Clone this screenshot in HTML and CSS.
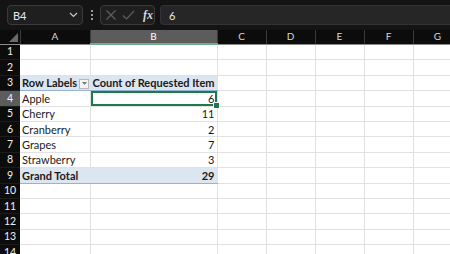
FILE: index.html
```html
<!DOCTYPE html>
<html lang="en">
<head>
  <meta charset="UTF-8">
  <title>PivotTable</title>
  <link rel="stylesheet" href="styles.css">
</head>
<body>
  <div class="formula-bar">
    <div class="name-box">
      <span>B4</span>
      <svg width="9" height="6" viewBox="0 0 9 6"><path d="M1 1 L4.5 4.5 L8 1" fill="none" stroke="#c8c8c8" stroke-width="1.2"/></svg>
    </div>
    <div class="dots"><i></i><i></i><i></i></div>
    <div class="fx-box">
      <svg width="12" height="12" viewBox="0 0 12 12"><path d="M1.5 1.5 L10.5 10.5 M10.5 1.5 L1.5 10.5" stroke="#5e5e5e" stroke-width="1.2"/></svg>
      <svg width="13" height="12" viewBox="0 0 13 12"><path d="M1 6.5 L4.5 10 L12 2" fill="none" stroke="#5e5e5e" stroke-width="1.2"/></svg>
      <span class="fx">fx</span>
    </div>
    <div class="formula-input">6</div>
  </div>

  <table class="sheet">
    <colgroup>
      <col class="c-row"><col class="c-a"><col class="c-b"><col class="c-n"><col class="c-n"><col class="c-n"><col class="c-n"><col class="c-n">
    </colgroup>
    <thead>
      <tr>
        <th class="corner"><span class="tri"></span></th>
        <th>A</th><th class="sel">B</th><th>C</th><th>D</th><th>E</th><th>F</th><th>G</th>
      </tr>
    </thead>
    <tbody>
      <tr><th>1</th><td></td><td></td><td></td><td></td><td></td><td></td><td></td></tr>
      <tr><th>2</th><td></td><td></td><td></td><td></td><td></td><td></td><td></td></tr>
      <tr class="pivot-head">
        <th>3</th>
        <td class="label">Row Labels<span class="filter"><svg width="5" height="3" viewBox="0 0 5 3"><path d="M0 0 H5 L2.5 3 Z" fill="#7a7a7a"/></svg></span></td>
        <td class="label">Count of Requested Item</td>
        <td></td><td></td><td></td><td></td><td></td>
      </tr>
      <tr><th class="sel">4</th><td>Apple</td><td class="num active">6<span class="handle"></span></td><td></td><td></td><td></td><td></td><td></td></tr>
      <tr><th>5</th><td>Cherry</td><td class="num">11</td><td></td><td></td><td></td><td></td><td></td></tr>
      <tr><th>6</th><td>Cranberry</td><td class="num">2</td><td></td><td></td><td></td><td></td><td></td></tr>
      <tr><th>7</th><td>Grapes</td><td class="num">7</td><td></td><td></td><td></td><td></td><td></td></tr>
      <tr><th>8</th><td>Strawberry</td><td class="num">3</td><td></td><td></td><td></td><td></td><td></td></tr>
      <tr class="pivot-total"><th>9</th><td class="label">Grand Total</td><td class="label num">29</td><td></td><td></td><td></td><td></td><td></td></tr>
      <tr><th>10</th><td></td><td></td><td></td><td></td><td></td><td></td><td></td></tr>
      <tr><th>11</th><td></td><td></td><td></td><td></td><td></td><td></td><td></td></tr>
      <tr><th>12</th><td></td><td></td><td></td><td></td><td></td><td></td><td></td></tr>
      <tr><th>13</th><td></td><td></td><td></td><td></td><td></td><td></td><td></td></tr>
      <tr><th>14</th><td></td><td></td><td></td><td></td><td></td><td></td><td></td></tr>
    </tbody>
  </table>
</body>
</html>
```

FILE: styles.css
```css
body {
  margin: 0;
  width: 450px;
  height: 254px;
  overflow: hidden;
  background: #ffffff;
  font-family: Lato, "Liberation Sans", sans-serif;
}
.formula-bar {
  height: 30px;
  box-sizing: border-box;
  padding: 5px 0 5px 7px;
  background: #141414;
  display: flex;
  align-items: stretch;
}
.name-box {
  width: 76px;
  box-sizing: border-box;
  border: 1px solid #3a3a3a;
  border-radius: 4px;
  background: #1f1f1f;
  color: #e8e8e8;
  font-size: 11px;
  display: flex;
  align-items: center;
  justify-content: space-between;
  padding: 0 4px 0 5px;
}
.dots {
  width: 17px;
  display: flex;
  flex-direction: column;
  align-items: center;
  justify-content: center;
  gap: 2px;
}
.dots i {
  width: 2px;
  height: 2px;
  background: #9a9a9a;
}
.fx-box {
  width: 55px;
  box-sizing: border-box;
  border: 1px solid #3a3a3a;
  border-radius: 4px;
  background: #1f1f1f;
  display: flex;
  align-items: center;
  gap: 5px;
  padding-left: 4px;
  margin-right: 5px;
}
.fx {
  font-family: "Liberation Serif", serif;
  font-style: italic;
  font-weight: bold;
  font-size: 12px;
  color: #d8d8d8;
  margin-left: 3px;
}
.formula-input {
  flex: 1;
  border: 1px solid #333333;
  border-right: none;
  border-radius: 4px 0 0 4px;
  background: #262626;
  color: #e8e8e8;
  font-size: 11px;
  display: flex;
  align-items: center;
  padding-left: 8px;
}
.sheet {
  table-layout: fixed;
  border-collapse: collapse;
  width: 462px;
}
.c-row { width: 20px; }
.c-a { width: 70px; }
.c-b { width: 127px; }
.c-n { width: 49px; }
.sheet thead th {
  height: 13px;
  padding: 0;
  line-height: 13px;
  background: #0c0c0c;
  color: #d6d6d6;
  font-size: 10px;
  font-weight: normal;
  border-right: 1px solid #3a3a3a;
  border-bottom: 1px solid #8a8a8a;
}
.sheet thead th.sel {
  background: #5c5c5c;
  color: #ffffff;
  border-bottom: 2px solid #6fae8c;
}
.corner {
  position: relative;
}
.tri {
  position: absolute;
  right: 2px;
  bottom: 2px;
  width: 0;
  height: 0;
  border-left: 9px solid transparent;
  border-bottom: 9px solid #6a6a6a;
}
.sheet tbody th,
.sheet td {
  height: 14.4px;
  line-height: 13px;
  padding: 0 2px;
}
.sheet tbody th {
  padding: 0;
  background: #0c0c0c;
  color: #f0f0f0;
  font-size: 10.5px;
  font-weight: normal;
  border-bottom: 1px solid #1c1c1c;
  text-align: center;
}
.sheet tbody th.sel {
  background: #5c5c5c;
}
.sheet td {
  font-size: 11px;
  color: #1a1a1a;
  white-space: nowrap;
  overflow: visible;
  border-right: 1px solid #e1e1e1;
  border-bottom: 1px solid #e1e1e1;
}
.num {
  text-align: right;
}
.label {
  font-weight: bold;
}
.pivot-head td.label {
  background: #dce6f1;
  border-bottom: 1px solid #95b3d7;
  border-right-color: #dce6f1;
}
.pivot-total td.label {
  background: #dce6f1;
  border-top: 1px solid #95b3d7;
  border-bottom: 1px solid #95b3d7;
  border-right-color: #dce6f1;
}
.pivot-head td:nth-child(3) {
  border-right-color: #e1e1e1;
}
.filter {
  display: inline-flex;
  vertical-align: middle;
  margin: -2px 0 0 2px;
  width: 10px;
  height: 10px;
  box-sizing: border-box;
  border: 1px solid #b8b8b8;
  background: #f4f4f4;
  align-items: center;
  justify-content: center;
}
.active {
  position: relative;
  box-shadow: inset 0 0 0 2px #1f7a4a;
}
.handle {
  position: absolute;
  right: -3px;
  bottom: -3px;
  width: 5px;
  height: 5px;
  background: #1f7a4a;
  border: 1px solid #ffffff;
}
```
